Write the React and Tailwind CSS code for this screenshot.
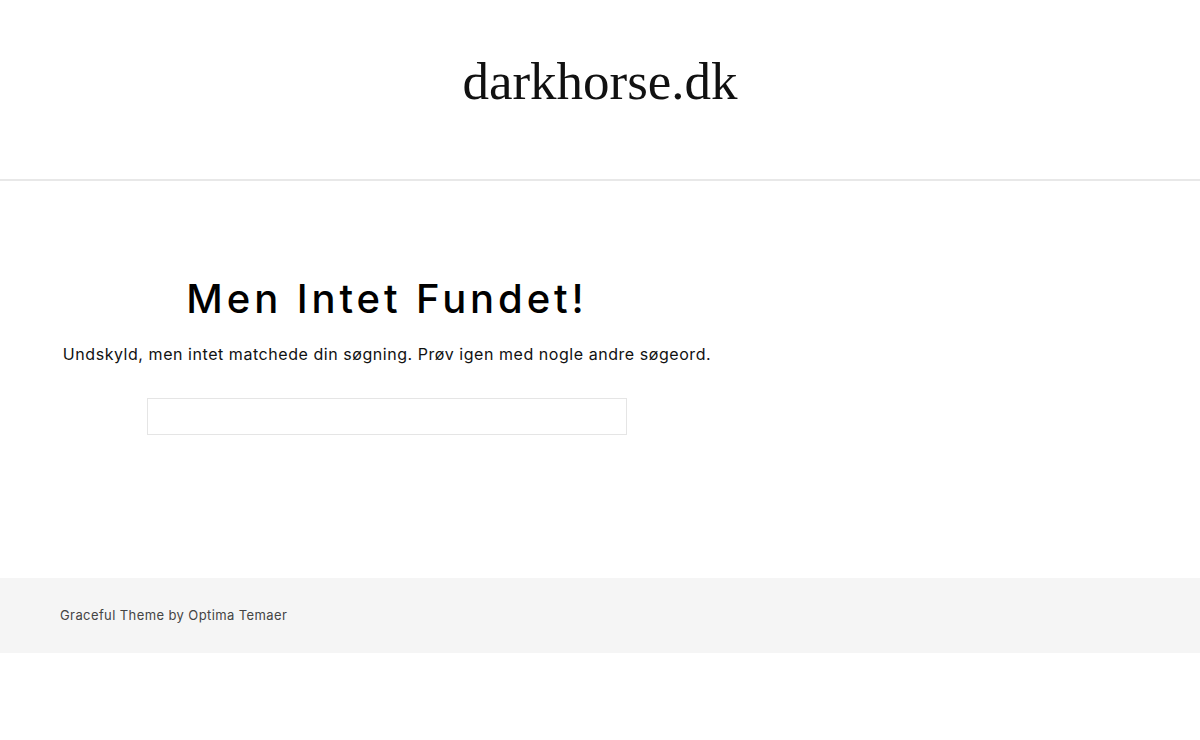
export default function App() {
  return (
    <div className="min-h-screen bg-white" style={{ fontFamily: '"Inter", "Liberation Sans", sans-serif' }}>
      <header className="h-[181px] border-b-2 border-[#e8e8e8] flex items-start justify-center">
        <h1 className="mt-[46px] text-[53px] leading-[70px] text-[#111]" style={{ fontFamily: '"Liberation Serif", serif' }}>
          darkhorse.dk
        </h1>
      </header>
      <main className="px-[60px] pt-[95px] pb-[143px]">
        <div className="w-[654px] flex flex-col items-center">
          <h2 className="text-[40px] leading-[46px] font-medium tracking-[3.9px] text-black">Men Intet Fundet!</h2>
          <p className="mt-[20px] text-[16px] leading-[24px] tracking-[0.55px] text-[#111]">
            Undskyld, men intet matchede din søgning. Prøv igen med nogle andre søgeord.
          </p>
          <input type="text" className="mt-[32px] w-[480px] h-[37px] border border-[#e5e5e5] outline-none" />
        </div>
      </main>
      <footer className="h-[75px] bg-[#f5f5f5] px-[60px] flex items-center">
        <span className="text-[13px] tracking-[0.4px] text-[#444]">Graceful Theme by Optima Temaer</span>
      </footer>
    </div>
  );
}
